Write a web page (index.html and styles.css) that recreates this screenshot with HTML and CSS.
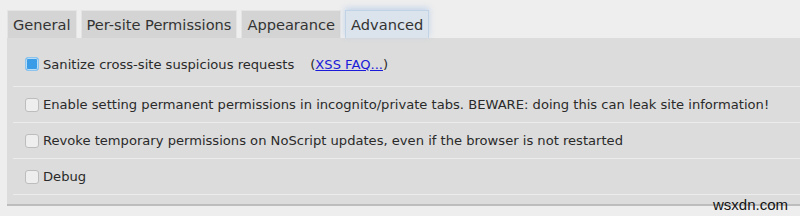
FILE: index.html
```html
<!DOCTYPE html>
<html lang="en">
<head>
  <meta charset="UTF-8"/>
  <title>NoScript Options</title>
  <link rel="stylesheet" href="styles.css">
</head>
<body>
<div class="tabs">
  <div class="tab">General</div>
  <div class="tab">Per-site Permissions</div>
  <div class="tab">Appearance</div>
  <div class="tab active">Advanced</div>
</div>
<div class="panel">
  <label class="opt first">
    <span class="box checked"></span>
    Sanitize cross-site suspicious requests
    <span class="faq">(<a href="#">XSS FAQ...</a>)</span>
  </label>
  <label class="opt">
    <span class="box"></span>
    Enable setting permanent permissions in incognito/private tabs. BEWARE: doing this can leak site information!
  </label>
  <label class="opt">
    <span class="box"></span>
    Revoke temporary permissions on NoScript updates, even if the browser is not restarted
  </label>
  <label class="opt">
    <span class="box"></span>
    Debug
  </label>
</div>
<div class="mark">wsxdn.com</div>
</body>
</html>
```

FILE: styles.css
```css
body {
    margin: 0;
    background: #eeeeee;
    font-family: "DejaVu Sans", sans-serif;
    font-size: 13.1px;
    color: #2a2a2a;
    width: 800px;
    height: 216px;
    overflow: hidden;
    position: relative;
}
.tabs {
    display: flex;
    gap: 4px;
    padding: 10px 0 0 7px;
}
.tab {
    height: 28px;
    line-height: 27px;
    padding: 0 5px;
    background: #d4d4d4;
    border: 1px solid #e4e4e4;
    border-bottom: none;
    box-sizing: border-box;
    font-size: 14.6px;
    color: #333;
}
.tab.active {
    background: #dbe3ec;
    border-color: #c3d3e6;
    box-shadow: 0 -2px 6px rgba(140, 180, 230, 0.45);
}
.panel {
    margin-left: 7px;
    background: #dcdcdc;
    padding: 12px 0 0 6px;
    border-bottom: 2px solid #bdbdbd;
    height: 154px;
}
.opt {
    display: flex;
    align-items: center;
    height: 36px;
    border-bottom: 1px solid #ececec;
    padding-left: 12px;
    gap: 4px;
    box-sizing: border-box;
}
.opt.first {
    height: 37px;
    align-items: flex-start;
    padding-top: 7px;
}
.box {
    width: 12px;
    height: 12px;
    border: 1px solid #bdbdbd;
    border-radius: 3px;
    background: #eeeeee;
    flex: none;
}
.box.checked {
    background: #3a9be6;
    border-color: #8cc4ee;
    box-shadow: inset 0 0 0 1px #b8dcf5;
}
.faq {
    margin-left: 12px;
}
.faq a {
    color: #1a1ad8;
}
.mark {
    position: absolute;
    right: 12px;
    bottom: 3px;
    font-family: "Liberation Sans", sans-serif;
    font-size: 15px;
    color: #111;
}
```
